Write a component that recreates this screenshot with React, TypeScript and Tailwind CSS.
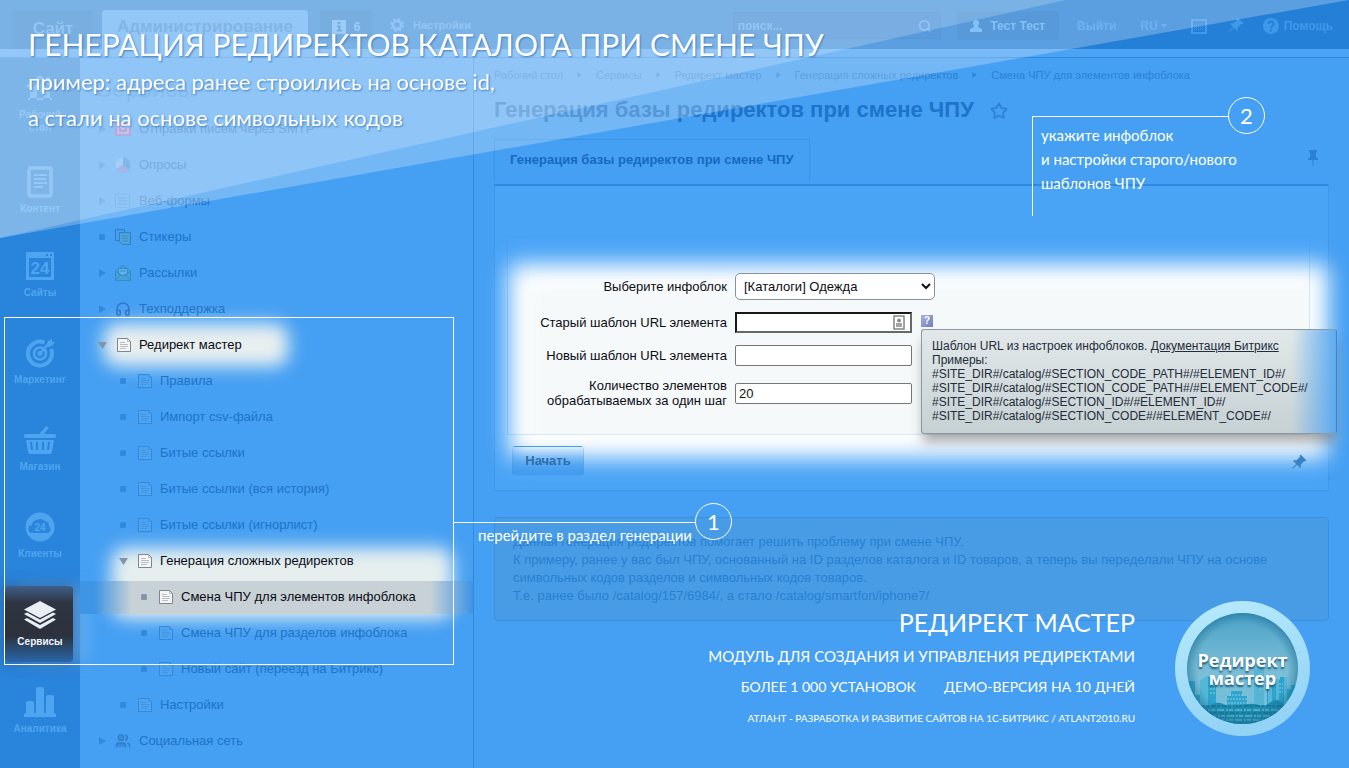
import type { ReactNode } from "react"
import { Headphones, Search, Star, Users } from "lucide-react"

const ui = "font-['Liberation_Sans',Arial,sans-serif]"
const promo = "font-['Lato','Open_Sans',sans-serif]"

/* ---------- section icons (left rail) ---------- */

const HomeIcon = () => (
  <svg viewBox="0 0 30 30" className="size-[30px]" fill="currentColor">
    <path d="M15 2 1 13l2 2 12-9 12 9 2-2-4-3V4h-4v3z" />
    <path d="m15 8-10 8v11h7v-8h6v8h7V16zM3 25h24v2H3z" />
  </svg>
)
const ContentIcon = () => (
  <svg viewBox="0 0 26 32" className="h-8 w-[26px]" fill="none" stroke="currentColor">
    <rect x="2" y="2" width="22" height="28" rx="2" strokeWidth="3.5" />
    <path d="M7 9h13M7 13h12M7 17h13M7 21h9" strokeWidth="2" />
  </svg>
)
const SitesIcon = () => (
  <svg viewBox="0 0 28 28" className="size-7">
    <path fill="currentColor" fillRule="evenodd" d="M1 0h26a1 1 0 0 1 1 1v27H0V1a1 1 0 0 1 1-1zm2 6v19h22V6zm17-4v2h2V2zm4 0v2h2V2z" />
    <text x="14" y="22" textAnchor="middle" fontSize="17" fontWeight="bold" fill="currentColor">24</text>
  </svg>
)
const MarketingIcon = () => (
  <svg viewBox="0 0 30 30" className="size-[30px]" fill="none" stroke="currentColor">
    <path d="M19.500 4.500A12 12 0 1 0 26 11" strokeWidth="4" />
    <circle cx="15" cy="15.500" r="6" strokeWidth="2.500" />
    <circle cx="15" cy="15.500" r="2.500" fill="currentColor" stroke="none" />
    <path d="M15 15.500 25 4" strokeWidth="2.500" />
    <path d="m22 7 1-4 4-2 0 3 3 0-3 4-4 1z" fill="currentColor" stroke="none" />
  </svg>
)
const ShopIcon = () => (
  <svg viewBox="0 0 32 30" className="h-[30px] w-8" fill="currentColor">
    <path d="m22 1 3 2-7 8h-4z" />
    <rect x="0" y="9" width="32" height="4" rx="1.500" />
    <path fillRule="evenodd" d="M2 15h28l-2 12a2 2 0 0 1-2 2H6a2 2 0 0 1-2-2zm4 2 1 8h2l-1-8zm6 0v8h2v-8zm6 0v8h2v-8zm6 0-1 8h2l1-8z" />
  </svg>
)
const ClientsIcon = () => (
  <svg viewBox="0 0 30 30" className="size-[30px]">
    <circle cx="15" cy="15" r="14.500" fill="currentColor" />
    <path d="M8 21a4 4 0 0 1-1-8 5 5 0 0 1 5-5 6 6 0 0 1 8 1 5 5 0 0 1 4 5 4 4 0 0 1-1 7z" fill="#2a86dc" />
    <text x="15" y="19" textAnchor="middle" fontSize="10" fontWeight="bold" fill="currentColor">24</text>
  </svg>
)
const ServicesIcon = () => (
  <svg viewBox="0 0 32 28" className="h-7 w-8" fill="#e9eff5">
    <path d="M16 0 32 8.500 16 17 0 8.500z" />
    <path d="m0 13 3-1.500 13 7 13-7 3 1.500-16 9z" />
    <path d="m0 18.500 3-1.500 13 7 13-7 3 1.500L16 28z" />
  </svg>
)
const AnalyticsIcon = () => (
  <svg viewBox="0 0 32 30" className="h-[30px] w-8" fill="currentColor">
    <path d="M2 16a2 2 0 0 1 2-2h4a2 2 0 0 1 2 2v10h2V2a2 2 0 0 1 2-2h4a2 2 0 0 1 2 2v24h2V10a2 2 0 0 1 2-2h4a2 2 0 0 1 2 2v16l2 1v3H0v-3l2-1z" />
  </svg>
)

const PinIcon = ({ className }: { className: string }) => (
  <svg viewBox="0 0 16 16" className={"size-4 shrink-0 " + className} fill="currentColor">
    <path d="M4 0h8v2h-1v5l2 2v1H8.500v6h-1v-6H3V9l2-2V2H4z" />
  </svg>
)

const sections: { label: string; icon: ReactNode; height: string; active?: boolean }[] = [
  { label: "Рабочий стол", icon: <HomeIcon />, height: "h-[94px]" },
  { label: "Контент", icon: <ContentIcon />, height: "h-[84px]" },
  { label: "Сайты", icon: <SitesIcon />, height: "h-[87px]" },
  { label: "Маркетинг", icon: <MarketingIcon />, height: "h-[87px]" },
  { label: "Магазин", icon: <ShopIcon />, height: "h-[87px]" },
  { label: "Клиенты", icon: <ClientsIcon />, height: "h-[88px]" },
  { label: "Сервисы", icon: <ServicesIcon />, height: "h-[87px]", active: true },
  { label: "Аналитика", icon: <AnalyticsIcon />, height: "h-[87px]" },
]

/* ---------- menu tree ---------- */

const PageIcon = ({ lit }: { lit?: boolean }) => (
  <svg viewBox="0 0 14 14" className="h-[14px] w-[14px]" fill={lit ? "#f4f5f5" : "#4fa4f1"} stroke={lit ? "#7e8791" : "#3388d8"}>
    <path d="M.5.500h10l3 3v10H.5z" />
    <path d="M10.500.500v3h3M3 4.500h5M3 6.500h8M3 8.500h8M3 10.500h6" fill="none" strokeOpacity=".5" />
  </svg>
)
const MailIcon = () => (
  <svg viewBox="0 0 16 16" className="size-4">
    <rect width="16" height="14" y="1" rx="1" fill="#8f6cc0" />
    <path d="M3 4h10v8H3zl5 4 5-4" fill="none" stroke="#8fb4ea" strokeWidth="1.500" />
  </svg>
)
const PieIcon = () => (
  <svg viewBox="0 0 16 16" className="size-4">
    <circle cx="8" cy="8" r="7.500" fill="#2c86dc" />
    <path d="M8 8V.500A7.500 7.500 0 0 0 1.500 12z" fill="#66aef0" />
    <path d="M8 8 1.500 12A7.500 7.500 0 0 0 14 12.500z" fill="#6f84d4" />
  </svg>
)
const FormIcon = () => (
  <svg viewBox="0 0 16 16" className="size-4" fill="none" stroke="#3a90e0">
    <rect x=".5" y="1.500" width="14" height="13" />
    <path d="M3 5h9M3 8h9M3 11h9" strokeWidth="1.500" />
  </svg>
)
const StickerIcon = () => (
  <svg viewBox="0 0 16 16" className="size-4" stroke="#2f80c8">
    <path d="M.5.500h9v11h-9z" fill="#479ce8" />
    <path d="M4.500 3.500h11v12h-8l-3-3z" fill="#4ba3d6" />
    <path d="M7 7h6M7 9.500h6M8 12h5" strokeOpacity=".6" />
  </svg>
)
const LetterIcon = () => (
  <svg viewBox="0 0 16 16" className="size-4" stroke="#338bc8">
    <path d="M.5 6 8 .500 15.500 6v9.500H.5z" fill="#46a3d6" />
    <path d="M3.500 3.500h9V9L8 11 3.500 9z" fill="#62b2f3" />
    <path d="m.5 15 5-5M15.500 15l-5-5M1 6.500 8 11l7-4.500M5 6h6" fill="none" />
  </svg>
)

interface Node {
  label: string
  level: 0 | 1 | 2
  mark: "closed" | "open" | "dot"
  icon?: ReactNode
  lit?: boolean
  selected?: boolean
}

const tree: Node[] = [
  { label: "Отправки писем через SMTP", level: 0, mark: "closed", icon: <MailIcon /> },
  { label: "Опросы", level: 0, mark: "closed", icon: <PieIcon /> },
  { label: "Веб-формы", level: 0, mark: "closed", icon: <FormIcon /> },
  { label: "Стикеры", level: 0, mark: "dot", icon: <StickerIcon /> },
  { label: "Рассылки", level: 0, mark: "closed", icon: <LetterIcon /> },
  { label: "Техподдержка", level: 0, mark: "closed", icon: <Headphones className="size-4 text-[#2f78cc]" strokeWidth={2.5} /> },
  { label: "Редирект мастер", level: 0, mark: "open", lit: true },
  { label: "Правила", level: 1, mark: "dot" },
  { label: "Импорт csv-файла", level: 1, mark: "dot" },
  { label: "Битые ссылки", level: 1, mark: "dot" },
  { label: "Битые ссылки (вся история)", level: 1, mark: "dot" },
  { label: "Битые ссылки (игнорлист)", level: 1, mark: "dot" },
  { label: "Генерация сложных редиректов", level: 1, mark: "open", lit: true },
  { label: "Смена ЧПУ для элементов инфоблока", level: 2, mark: "dot", lit: true, selected: true },
  { label: "Смена ЧПУ для разделов инфоблока", level: 2, mark: "dot" },
  { label: "Новый сайт (переезд на Битрикс)", level: 2, mark: "dot" },
  { label: "Настройки", level: 1, mark: "dot" },
  { label: "Социальная сеть", level: 0, mark: "closed", icon: <Users className="size-4 fill-[#3a8bd8] text-[#2f7fce]" /> },
]

const indent = ["pl-[17px]", "pl-[38px]", "pl-[59px]"]

function Mark({ kind, lit }: { kind: Node["mark"]; lit?: boolean }) {
  const color = lit ? "text-[#8394a8]" : "text-[#3388dc]"
  return (
    <svg viewBox="0 0 10 10" className={"size-[10px] shrink-0 " + color} fill="currentColor">
      {kind === "closed" && <path d="M2 1v8l7-4z" />}
      {kind === "open" && <path d="M1 2h9L5.500 9z" />}
      {kind === "dot" && <rect x="2" y="2" width="6" height="6" rx="1.500" />}
    </svg>
  )
}

function TreeRow({ node }: { node: Node }) {
  return (
    <li className="relative flex h-9 items-center">
      {node.selected && (
        <span className="absolute inset-x-0 top-[2px] h-[33px] bg-[linear-gradient(to_right,#3f95e5_15px,#c8d2d6_52px,#c8d2d6_350px,#3f95e5_392px)]" />
      )}
      <a href="#" className={"relative flex items-center " + indent[node.level] + " " + (node.lit ? "text-[#0b0b14]" : "text-[#1f74c8]")}>
        <Mark kind={node.mark} lit={node.lit} />
        <span className="ml-2 flex w-4 shrink-0 justify-end">{node.icon ?? <PageIcon lit={node.lit} />}</span>
        <span className="ml-2 whitespace-nowrap">{node.label}</span>
      </a>
    </li>
  )
}

/* ---------- top bar ---------- */

function TopBar() {
  return (
    <header className="flex h-[49px] items-start bg-[#247fd6] pl-[13px] text-xs font-bold text-[#59abf3]">
      <a href="#" className="mt-[10px] flex h-[39px] w-20 items-center justify-center rounded-t bg-[#1f78cd] text-[17px] text-[#4a9fec]">Сайт</a>
      <a href="#" className="ml-[9px] mt-[10px] flex h-[48px] w-[206px] shrink-0 justify-center rounded-t bg-[#4ba3f5] pt-[6px] text-[17px] text-[#2f83d8]">
        Администрирование
      </a>
      <button className="ml-3 mt-[10px] flex h-[33px] w-[52px] items-center justify-center gap-2 rounded bg-[#1f77cc] text-xs">
        <svg viewBox="0 0 14 14" className="size-[14px]">
          <rect width="14" height="14" fill="currentColor" />
          <path d="M5.500 2h3v2h-3zM5 5.500h3.500V10H10v1.500H4.500V10H6V7H5z" fill="#1f77cc" />
        </svg>
        6
      </button>
      <a href="#" className="ml-[18px] mt-[18px] flex items-center gap-[9px] text-[11px] text-[#4a9fec]">
        <svg viewBox="0 0 14 14" className="size-[14px]" fill="none" stroke="currentColor">
          <circle cx="7" cy="7" r="4" strokeWidth="2.500" />
          <circle cx="7" cy="7" r="6" strokeWidth="2" strokeDasharray="2.400 2.310" />
        </svg>
        Настройки
      </a>
      <label className="ml-auto mt-3 flex h-[27px] w-[208px] items-center border border-[#2072c4] bg-[#2279cf] pl-1 pr-2">
        <input aria-label="поиск" placeholder="поиск..." className="min-w-0 flex-1 bg-transparent text-xs outline-none placeholder:text-[#4a9fec]" />
        <Search className="size-[14px] text-[#4aa0ee]" strokeWidth={3} />
      </label>
      <button className="ml-4 mt-[11px] flex h-[29px] w-[102px] items-center justify-center gap-2 rounded bg-[#1f77cc]">
        <svg viewBox="0 0 12 12" className="size-3" fill="currentColor">
          <path d="M6 0a3 3 0 0 1 3 3c0 2-1 3-1 4l4 2v3H0V9l4-2c0-1-1-2-1-4a3 3 0 0 1 3-3z" />
        </svg>
        Тест Тест
      </button>
      <div className="mr-4 mt-[18px] flex h-4 items-center text-xs text-[#3f98ea]">
        <a href="#" className="ml-[18px]">Выйти</a>
        <button className="ml-6 flex items-center gap-[3px]">
          RU
          <svg viewBox="0 0 6 4" className="h-1 w-[6px]" fill="currentColor"><path d="M0 0h6L3 4z" /></svg>
        </button>
        <svg viewBox="0 0 16 15" className="ml-6 h-[15px] w-4" fill="none" stroke="currentColor">
          <rect x="1" y="1" width="14" height="13" strokeWidth="2" />
          <path d="M3 6.500h10M3 8.500h10M3 10.500h10" strokeDasharray="1 1" />
        </svg>
        <PinIcon className="ml-5 rotate-45" />
        <a href="#" className="ml-5 flex items-center gap-[5px]">
          <svg viewBox="0 0 16 16" className="size-4">
            <circle cx="8" cy="8" r="8" fill="currentColor" />
            <path d="M5.500 6a2.500 2.500 0 1 1 4 2C8.500 8.500 8 9 8 10" fill="none" stroke="#247fd6" strokeWidth="2" />
            <rect x="7" y="11.500" width="2" height="2" fill="#247fd6" />
          </svg>
          Помощь
        </a>
      </div>
    </header>
  )
}

/* ---------- form ---------- */

const field = "h-[21px] w-[177px] rounded-[2px] border border-[#767676] bg-white px-[3px] text-[13px] text-[#111] outline-none"

function Tooltip() {
  return (
    <div
      role="tooltip"
      className="absolute left-0 top-[14px] z-10 h-[105px] w-[416px] rounded-[3px] border border-[#8b9ba6] border-r-[#4086c8] bg-[linear-gradient(to_right,transparent_370px,#56a7f2_416px),linear-gradient(to_bottom,#e2e8e9,#c6d1d3)] pl-[10px] pt-[9px] text-xs/[14px] text-[#232c3a] shadow-[0_10px_12px_-2px_rgba(90,90,90,0.5)]"
    >
      <p>
        Шаблон URL из настроек инфоблоков. <a href="#" className="underline">Документация Битрикс</a>
      </p>
      <p>Примеры:</p>
      <p>#SITE_DIR#/catalog/#SECTION_CODE_PATH#/#ELEMENT_ID#/</p>
      <p>#SITE_DIR#/catalog/#SECTION_CODE_PATH#/#ELEMENT_CODE#/</p>
      <p>#SITE_DIR#/catalog/#SECTION_ID#/#ELEMENT_ID#/</p>
      <p>#SITE_DIR#/catalog/#SECTION_CODE#/#ELEMENT_CODE#/</p>
    </div>
  )
}

function RedirectForm() {
  return (
    <form className="relative border border-[#3f97ea] border-t-2 border-t-[#3189dd] bg-[#4aa4f6] pb-[14px] pl-3 pr-[18px] pt-[50px]">
      <div className="absolute bottom-[32px] left-[14px] right-0 top-[78px] rounded-lg bg-white blur-[11px]" />
      <div className="relative border border-[#3c92e4]/20 pb-[26px] pt-9">
        <div className="absolute inset-0 overflow-hidden">
          <div className="absolute -bottom-6 -right-6 left-5 top-12 bg-[#f5f9fa] blur-[8px]" />
        </div>
        <div className="relative grid grid-cols-[219px_1fr] items-center gap-x-2 gap-y-3 text-[13px]/[15px] text-[#0c0c14]">
          <label htmlFor="iblock" className="text-right">Выберите инфоблок</label>
          <div className="relative h-[27px] w-[200px]">
            <select id="iblock" className="size-full appearance-none rounded-[5px] border border-[#87919c] bg-white pl-2 text-[13px] outline-none">
              <option>[Каталоги] Одежда</option>
            </select>
            <svg viewBox="0 0 10 7" className="pointer-events-none absolute right-1 top-[10px] h-[7px] w-[10px]" fill="none" stroke="#111" strokeWidth="2">
              <path d="m1 1 4 4 4-4" />
            </svg>
          </div>

          <label htmlFor="old" className="text-right">Старый шаблон URL элемента</label>
          <div className="flex items-start gap-[9px]">
            <div className="relative h-[21px] w-[177px]">
              <input id="old" className="size-full border-2 border-[#686868] border-l-[#181818] border-t-[#181818] bg-white px-1 pr-6 outline-none" />
              <svg viewBox="0 0 12 15" className="absolute right-[7px] top-[3px] h-[15px] w-3" fill="none" stroke="#858585">
                <rect x="1" y="1" width="10" height="13" strokeWidth="1.500" />
                <circle cx="6" cy="5.500" r="1.500" fill="#858585" />
                <path d="M3 9h6M3 11h6" strokeWidth="1.500" />
              </svg>
            </div>
            <div className="relative mt-[3px]">
              <button type="button" aria-label="Подсказка" className="block size-3 bg-[linear-gradient(135deg,#a9b2dc,#6f7dbb)] text-[10px]/[12px] font-bold text-white">?</button>
              <Tooltip />
            </div>
          </div>

          <label htmlFor="new" className="text-right">Новый шаблон URL элемента</label>
          <input id="new" className={field} />

          <label htmlFor="step" className="text-right">
            Количество элементов
            <br />
            обрабатываемых за один шаг
          </label>
          <input id="step" defaultValue="20" className={field} />
        </div>
      </div>
      <div className="relative mt-[11px] flex h-[30px] items-center justify-between pl-[5px]">
        <button type="button" className="h-full w-[72px] rounded border border-[#3b8fe0]/20 bg-[linear-gradient(to_bottom,transparent,#429bee)] text-[13px] font-bold text-[#2d6dad]">
          Начать
        </button>
        <PinIcon className="mr-1 mt-1 rotate-45 text-[#3b82c4]" />
      </div>
    </form>
  )
}

/* ---------- promo layer ---------- */

function Step({ n, className }: { n: number; className: string }) {
  return (
    <span className={"absolute flex size-[37px] items-center justify-center rounded-full border border-white text-[22px] " + className}>
      {n}
    </span>
  )
}

function Logo() {
  return (
    <div className="relative flex size-[135px] shrink-0 items-center justify-center">
      <svg viewBox="0 0 135 135" className="absolute inset-0 size-full">
        <defs>
          <linearGradient id="ring" x1="0" y1="0" x2="0.3" y2="1">
            <stop offset="0" stopColor="#b9ecfc" />
            <stop offset="1" stopColor="#93d3f6" />
          </linearGradient>
          <linearGradient id="sky" x1="0" y1="0" x2="0" y2="1">
            <stop offset="0" stopColor="#3f9cc4" />
            <stop offset=".5" stopColor="#7bbdd6" />
            <stop offset="1" stopColor="#6fc0da" />
          </linearGradient>
          <radialGradient id="shade">
            <stop offset=".8" stopColor="#1c6f96" stopOpacity="0" />
            <stop offset="1" stopColor="#12658c" stopOpacity=".5" />
          </radialGradient>
          <clipPath id="disc"><circle cx="67.500" cy="67.500" r="55.500" /></clipPath>
        </defs>
        <circle cx="67.500" cy="67.500" r="67.500" fill="url(#ring)" />
        <g clipPath="url(#disc)">
          <rect width="135" height="135" fill="url(#sky)" />
          <path d="M79 68h10v36H79z" fill="#57b4d3" />
          <path d="M12 80h8v14h5V80l8-5 8 5v24h-5 16v-9h4v-5h11v5h5v10h20V85h5v-6h8v-3h7v12h4v-4h12v50H12z" fill="#2fa3cb" />
          <path d="M25 80l8-5v30h-8zM93 86h4v18h-4zM101 78h3v25h-3zM109 76h3v28h-3zM79 68h3v36h-3z" fill="#53b8d8" />
          <path d="M54 94h14M52 98h20M50 102h24M35 84h5M35 88h5M35 92h5M84 73h4M84 78h4M84 83h4M84 88h4M104 83h4M104 87h4M104 91h4" stroke="#85cfe4" strokeDasharray="2 1" />
          <path d="M10 102q8-4 14 1t12 1 12-1 12 2 12-2 12 1 12-3 12 2 16-1v35H10z" fill="#1e8caf" />
          <path d="M24 109h86M34 115h70M42 119h50" stroke="#7cc9df" strokeWidth="1.500" strokeDasharray="7 2 2 1 4 2" opacity=".7" />
          <path d="M20 105h92M28 112h80" stroke="#136f92" strokeWidth="2" strokeDasharray="3 2 5 1" opacity=".6" />
          <circle cx="67.500" cy="67.500" r="56" fill="url(#shade)" />
        </g>
      </svg>
      <div className="relative text-center font-['Open_Sans',sans-serif] text-[18px]/[18px] font-bold text-white [text-shadow:0_2px_2px_#17577a]">
        Редирект
        <br />
        мастер
      </div>
    </div>
  )
}

function PromoLayer() {
  return (
    <div className={"pointer-events-none absolute inset-0 overflow-hidden text-white " + promo}>
      <div className="absolute inset-x-0 top-0 h-[238px] bg-white/25 [clip-path:polygon(0_0,100%_0,0_100%)]" />
      <div className="absolute inset-x-0 top-0 h-[238px] bg-white/20 [clip-path:polygon(0_0,79%_0,0_100%)]" />

      <div className="absolute left-7 top-6 [text-shadow:1px_1px_2px_#3a7fc0]">
        <h2 className="text-[30px]/[40px]">ГЕНЕРАЦИЯ РЕДИРЕКТОВ КАТАЛОГА ПРИ СМЕНЕ ЧПУ</h2>
        <p className="text-[22px]/[36px]">
          пример: адреса ранее строились на основе id,
          <br />а стали на основе символьных кодов
        </p>
      </div>

      <div className="absolute left-1 top-[317px] h-[348px] w-[450px] border border-white">
        <div className="absolute left-full top-[204px] w-[242px] border-t border-white pr-[3px] text-right text-[15px]/[24px]">
          перейдите в раздел генерации
          <Step n={1} className="-right-[37px] -top-[20px]" />
        </div>
      </div>

      <div className="absolute right-[121px] top-[116px] h-[100px] w-[196px] whitespace-nowrap border-l border-t border-white pl-2 pt-[6px] text-[15px]/[24px]">
        укажите инфоблок
        <br />
        и настройки старого/нового
        <br />
        шаблонов ЧПУ
        <Step n={2} className="-right-[37px] -top-[20px]" />
      </div>

      <div className="absolute bottom-8 right-[39px] flex items-center gap-10">
        <div className="whitespace-nowrap text-right">
          <p className="text-[25px]/[36px]">РЕДИРЕКТ МАСТЕР</p>
          <p className="text-[15px]/[32px]">МОДУЛЬ ДЛЯ СОЗДАНИЯ И УПРАВЛЕНИЯ РЕДИРЕКТАМИ</p>
          <p className="flex justify-end gap-7 text-[14px]/[30px]">
            <span>БОЛЕЕ 1 000 УСТАНОВОК</span>
            <span>ДЕМО-ВЕРСИЯ НА 10 ДНЕЙ</span>
          </p>
          <p className="text-[10px]/[32px]">АТЛАНТ - РАЗРАБОТКА И РАЗВИТИЕ САЙТОВ НА 1С-БИТРИКС / ATLANT2010.RU</p>
        </div>
        <Logo />
      </div>
    </div>
  )
}

const crumbs = ["Рабочий стол", "Сервисы", "Редирект мастер", "Генерация сложных редиректов", "Смена ЧПУ для элементов инфоблока"]

export default function App() {
  return (
    <div className={"relative flex min-h-screen flex-col overflow-hidden bg-[#459ff2] text-[13px] " + ui}>
      <TopBar />
      <div className="h-[9px] border-b border-[#3389dc] bg-[#4ba3f5]" />

      <div className="flex flex-1">
        <nav className="w-20 shrink-0 bg-[#2984db] text-center text-[10px]/[13px] font-bold text-[#4fa4f0]">
          {sections.map((s) => (
            <a key={s.label} href="#" className={"relative flex flex-col items-center " + s.height}>
              {s.active && (
                <span className="absolute left-[5px] top-px h-[76px] w-[68px] rounded bg-[linear-gradient(to_bottom,#3e5f8a,#2f3542_22%,#2c313c_65%,#2a66aa)] shadow-[0_0_12px_3px_rgba(44,70,110,0.4),14px_0_16px_rgba(150,205,250,0.4)]" />
              )}
              <span className="relative flex h-[60px] shrink-0 items-center">{s.icon}</span>
              <span className={"relative -mt-[10px] w-[56px] " + (s.active ? "text-[#f2f6fa]" : "")}>{s.label}</span>
            </a>
          ))}
        </nav>

        <aside className="relative w-[394px] shrink-0 border-r border-[#3389dc]">
          <div className="absolute left-[30px] top-[272px] h-[30px] w-[172px] rounded-lg bg-[#e9efef] shadow-[0_0_12px_7px_#dcebf5] blur-[7px]" />
          <div className="absolute left-[38px] top-[496px] h-[58px] w-[328px] rounded-lg bg-[#e6eeee] shadow-[0_0_12px_7px_#dcebf5] blur-[7px]" />
          <h2 className="relative flex h-[53px] items-center pl-[15px] pt-2 text-2xl text-[#3a8fe2]">Сервисы</h2>
          <ul>
            {tree.map((n) => (
              <TreeRow key={n.label} node={n} />
            ))}
          </ul>
        </aside>

        <main className="min-w-0 flex-1 px-5">
          <nav aria-label="Навигация" className="mt-2 flex h-[18px] items-center text-[11px] text-[#2b82d4]">
            {crumbs.map((c, i) => (
              <span key={c} className="flex items-center whitespace-nowrap">
                {i > 0 && <svg viewBox="0 0 4 6" className="mx-[14px] h-[6px] w-[5px]" fill="currentColor"><path d="M0 0v6l4-3z" /></svg>}
                <a href="#">{c}</a>
              </span>
            ))}
          </nav>
          <h1 className="mt-[11px] flex h-[28px] items-center gap-4 whitespace-nowrap text-[22px] font-bold text-[#1e74ca]">
            Генерация базы редиректов при смене ЧПУ
            <Star className="mt-1 size-[18px] text-[#2f83d6]" strokeWidth={2.5} />
          </h1>
          <div className="mt-4 flex h-[45px] items-start justify-between pr-2">
            <div className="flex h-[41px] items-center border border-b-0 border-[#3b93e6] px-[15px] font-bold text-[#186abf]">
              Генерация базы редиректов при смене ЧПУ
            </div>
            <PinIcon className="mt-[11px] text-[#2b82d4]" />
          </div>
          <RedirectForm />
          <div className="mt-[26px] rounded border border-[#3a90e0] bg-[#489ce6] px-[18px] py-[15px] text-[13px]/[18px] text-[#2780d0]">
            Данная генерация редиректов помогает решить проблему при смене ЧПУ.
            <br />
            К примеру, ранее у вас был ЧПУ, основанный на ID разделов каталога и ID товаров, а теперь вы переделали ЧПУ на основе
            символьных кодов разделов и символьных кодов товаров.
            <br />
            Т.е. ранее было /catalog/157/6984/, а стало /catalog/smartfon/iphone7/
          </div>
        </main>
      </div>

      <PromoLayer />
    </div>
  )
}
